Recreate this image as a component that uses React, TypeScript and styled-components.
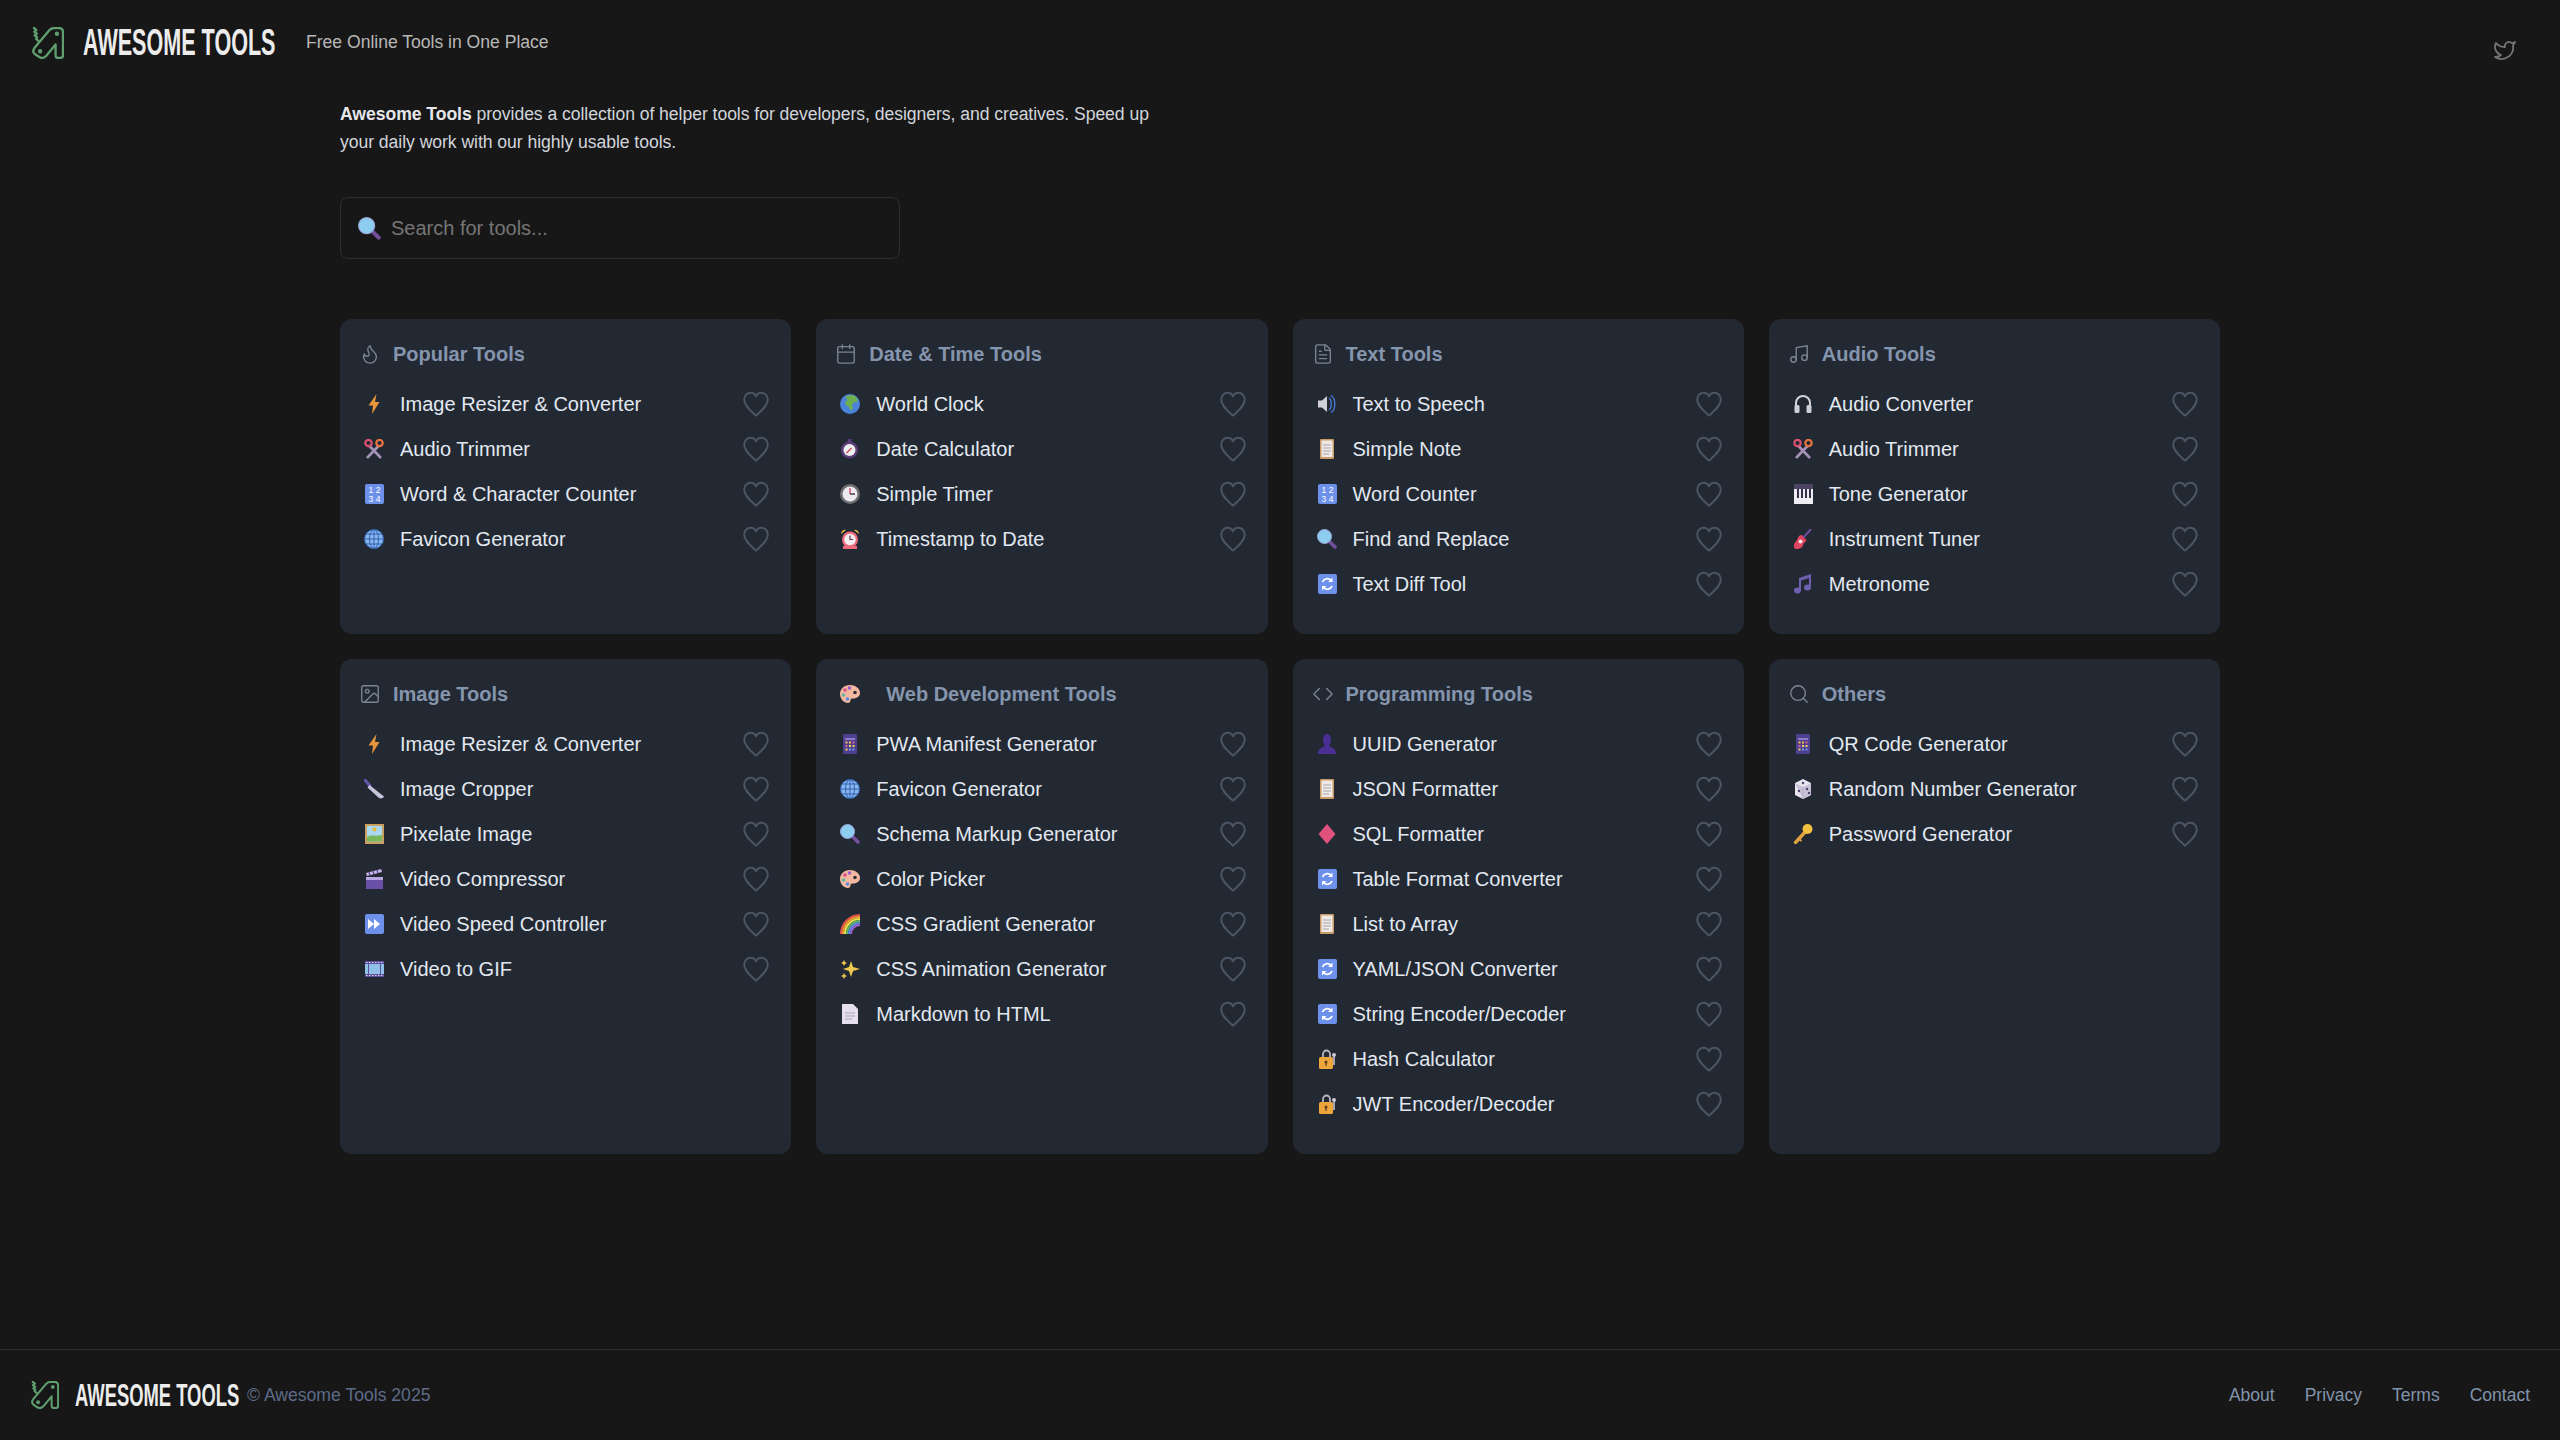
import React from 'react';
import styled, { createGlobalStyle } from 'styled-components';
import { Calendar, Code, FileText, Flame, Image, Music, Search, Twitter } from 'lucide-react';

const GlobalStyle = createGlobalStyle`
  html, body {
    margin: 0;
    padding: 0;
    background: #171717;
  }
  body {
    font-family: "Liberation Sans", Arial, sans-serif;
    color: #e2e8f0;
  }
`;

const Page = styled.div`
  min-height: 1440px;
  display: flex;
  flex-direction: column;
`;

// Header
const Header = styled.header`
  height: 84px;
  display: flex;
  align-items: flex-start;
  justify-content: space-between;
  padding: 24px 43px 0 32px;
  box-sizing: border-box;
`;

const Brand = styled.div`
  display: flex;
  align-items: center;
`;

const LogoText = styled.span<{ $size: number; $box: number }>`
  display: inline-block;
  width: ${p => p.$box}px;
  font-size: ${p => p.$size}px;
  font-weight: 700;
  line-height: 1;
  color: #ececec;
  white-space: nowrap;
  transform: scaleX(0.575);
  transform-origin: left center;
`;

const Tagline = styled.span`
  margin-left: 30px;
  font-size: 17.6px;
  letter-spacing: -0.02px;
  color: #b8b8b8;
`;

const TwitterLink = styled.a`
  display: flex;
  color: #757575;
  margin-top: 14px;
`;

// Intro
const Main = styled.main`
  width: 1880px;
  margin: 0 auto;
  flex: 1;
`;

const Intro = styled.p`
  width: 830px;
  margin: 16px 0 0;
  font-size: 17.6px;
  line-height: 28px;
  letter-spacing: -0.05px;
  color: #d1d5db;

  strong {
    color: #e5e7eb;
  }
`;

const SearchBox = styled.div`
  width: 560px;
  height: 62px;
  margin: 41px 0 60px;
  box-sizing: border-box;
  display: flex;
  align-items: center;
  gap: 10px;
  padding-left: 17px;
  border: 1px solid #2e2e2e;
  border-radius: 8px;
`;

const SearchInput = styled.input`
  flex: 1;
  padding: 0;
  border: 0;
  outline: 0;
  background: transparent;
  font-family: inherit;
  font-size: 20px;
  color: #e2e8f0;

  &::placeholder {
    color: #757575;
    opacity: 1;
  }
`;

// Tool grid
const Grid = styled.div`
  display: grid;
  grid-template-columns: repeat(4, 1fr);
  gap: 25px;
`;

const Card = styled.section`
  background: #232933;
  border-radius: 12px;
  padding: 24px 24px 27px;
`;

const CardTitle = styled.h2`
  display: flex;
  align-items: center;
  height: 23px;
  margin: 0 0 16px;
  font-size: 20px;
  font-weight: 700;
  color: #8595ad;

  > svg.lucide {
    margin: -2px 12px 0 -5px;
    color: #7b8494;
    flex: none;
  }

  > svg.emoji {
    margin: -2px 26px 0 0;
    flex: none;
  }
`;

const ToolList = styled.ul`
  list-style: none;
  margin: 0;
  padding: 0;
`;

const ToolRow = styled.li`
  display: flex;
  align-items: center;
  height: 45px;
  font-size: 20px;
  color: #e2e8f0;

  > svg.emoji {
    margin-top: -2px;
  }
`;

const ToolName = styled.span`
  flex: 1;
  margin-left: 16px;
`;

const HeartButton = styled.button`
  display: flex;
  margin: -2px -2px 0 0;
  padding: 0;
  border: 0;
  background: transparent;
  color: #4b5563;
`;

// Footer
const Footer = styled.footer`
  height: 91px;
  box-sizing: border-box;
  border-top: 1px solid #2e2e2e;
  display: flex;
  align-items: center;
  justify-content: space-between;
  padding: 0 30px 0 31px;
`;

const FooterBrand = styled.div`
  display: flex;
  align-items: center;
`;

const Copyright = styled.span`
  margin-left: 9px;
  font-size: 17.6px;
  color: #5d6b88;
`;

const FooterLinks = styled.nav`
  display: flex;
  gap: 30px;
`;

const FooterLink = styled.a`
  font-size: 17.5px;
  color: #8294ab;
  text-decoration: none;
`;

// Drawings
const LogoMark: React.FC<{ size: number; gap: number }> = ({ size, gap }) => (
  <svg width={size} height={size} viewBox="0 0 95 95" fill="none" stroke="#5f9e6e" strokeWidth="7" strokeLinejoin="round" strokeLinecap="round" style={{ marginRight: gap, flex: 'none' }}>
    <path d="M6 3l7 6-6 5 7 6-6 5 7 5-3 5 7 6" />
    <path d="M9 60L52 9Q58 3 66 3L80 3Q92 3 92 15L92 84Q92 92 83 92L77 92Q70 92 70 84L70 52L42 86Q33 95 23 90L8 80Q-1 72 9 60Z" />
    <circle cx="24" cy="72" r="3" />
    <circle cx="74" cy="20" r="3" />
  </svg>
);

const HeartIcon = () => (
  <svg width="26" height="26" viewBox="0 0 26 26" fill="none" stroke="currentColor" strokeWidth="2" strokeLinejoin="round">
    <path d="M13 24.600C8 19.800 1.200 15 1.200 8.400 1.200 4.600 4.200 1.800 7.600 1.800 10 1.800 12 3.100 13 5.400 14 3.100 16 1.800 18.400 1.800 21.800 1.800 24.800 4.600 24.800 8.400 24.800 15 18 19.800 13 24.600Z" />
  </svg>
);

const emojiArt: Record<string, React.ReactNode> = {
  bolt: <path d="M12.500 0L4.500 11.500h4.500l-1 8.500 7.500-12h-4.500l1.500-8z" fill="#e8963a" />,
  scissors: (
    <g fill="none" strokeWidth="2.600">
      <path d="M3 19L14.500 7M17 19L5.500 7" stroke="#a592b8" />
      <circle cx="4.500" cy="4" r="3.200" stroke="#d9536f" strokeWidth="2.200" />
      <circle cx="15.500" cy="4" r="3.200" stroke="#e8743f" strokeWidth="2.200" />
    </g>
  ),
  numbers: (
    <g>
      <rect x="1" y="0" width="19" height="20" rx="2" fill="#6d90ea" />
      <text x="10.500" y="8.500" fontSize="8.500" textAnchor="middle" fill="#fff" fontFamily="Liberation Sans">1 2</text>
      <text x="10.500" y="17.500" fontSize="8.500" textAnchor="middle" fill="#fff" fontFamily="Liberation Sans">3 4</text>
    </g>
  ),
  globe: (
    <g fill="none" stroke="#2f5fb0" strokeWidth="1">
      <circle cx="10" cy="10" r="9.500" fill="#8ab8ee" />
      <ellipse cx="10" cy="10" rx="4.500" ry="9.500" />
      <path d="M10 .5v19M.5 10h19M2 5h16M2 15h16" />
    </g>
  ),
  earth: (
    <g>
      <circle cx="10" cy="10" r="10" fill="#4b83da" />
      <path d="M5 3c3-2 8-2 10-1l3 4-2 3-2-1-2 3 1 3-2 3-2-4-3-2-1-3 3-2z" fill="#6fb04e" />
    </g>
  ),
  stopwatch: (
    <g>
      <rect x="7.500" y="0" width="4" height="3" fill="#5b3d7a" />
      <circle cx="9.500" cy="11" r="8.500" fill="#5b3d7a" />
      <circle cx="9.500" cy="11" r="6" fill="#eee" />
      <path d="M6.500 14l5-5" stroke="#d0445e" strokeWidth="1.500" />
    </g>
  ),
  clock: (
    <g>
      <circle cx="10" cy="10" r="10" fill="#6e6e6e" />
      <circle cx="10" cy="10" r="7.500" fill="#eceaf0" />
      <path d="M10 4v6" stroke="#c9435e" strokeWidth="1.300" />
      <path d="M10 10h5" stroke="#444" strokeWidth="1.500" />
    </g>
  ),
  alarm: (
    <g>
      <path d="M1 5a4 4 0 0 1 5-4zM19 5a4 4 0 0 0-5-4z" fill="#e8c040" />
      <rect x="3" y="17" width="14" height="3" fill="#ee6a7d" />
      <circle cx="10" cy="10.500" r="8" fill="#ee6a7d" />
      <circle cx="10" cy="10.500" r="5.800" fill="#f3eef2" />
      <path d="M10 6.500v4h3" stroke="#5d3a50" strokeWidth="1.200" fill="none" />
    </g>
  ),
  speaker: (
    <g>
      <path d="M1 6.500h4L10 2v16l-5-4.500H1z" fill="#cfd0d8" />
      <path d="M12 4c3 2 3 10 0 12M14 1.500c5 3 5 14 0 17" stroke="#4a78d8" strokeWidth="1.400" fill="none" />
    </g>
  ),
  clipboard: (
    <g>
      <rect x="3" y="0" width="14" height="20" rx="1" fill="#c99a66" />
      <rect x="4.500" y="1.500" width="11" height="16.500" fill="#efeae6" />
      <path d="M6 6h8M6 9h8M6 12h8M6 15h6" stroke="#a8a4ad" strokeWidth="1" />
    </g>
  ),
  magnifier: (
    <g>
      <path d="M12.500 12.500l5.500 5.500" stroke="#73509c" strokeWidth="3.500" strokeLinecap="round" />
      <circle cx="7.500" cy="7.500" r="7" fill="#8dcdf0" stroke="#9aa6d8" strokeWidth="1" />
    </g>
  ),
  refresh: (
    <g>
      <rect x="1" y="0" width="19" height="20" rx="2" fill="#6d90ea" />
      <path d="M5.500 8A5 5 0 0 1 14 6.500M15 12a5 5 0 0 1-8.500 1.500" stroke="#fff" strokeWidth="1.800" fill="none" />
      <path d="M15.500 3.500v4.500h-4.500zM5 16.500V12h4.500z" fill="#fff" />
    </g>
  ),
  headphones: (
    <g>
      <path d="M3 13V9a7 7 0 0 1 14 0v4" stroke="#d4d4da" strokeWidth="2" fill="none" />
      <rect x="1.500" y="11" width="5" height="8" rx="1.500" fill="#cfcfd6" />
      <rect x="13.500" y="11" width="5" height="8" rx="1.500" fill="#cfcfd6" />
    </g>
  ),
  piano: (
    <g>
      <rect x="1" y="0" width="19" height="20" fill="#f0edf2" />
      <rect x="1" y="0" width="19" height="5" fill="#4d4362" />
      <path d="M4 5h2v9H4zM8 5h2v9H8zM12 5h2v9h-2zM16 5h2v9h-2z" fill="#33304a" />
    </g>
  ),
  guitar: (
    <g>
      <path d="M10 9l8-9" stroke="#6e4ca0" strokeWidth="2" />
      <path d="M8 6c2 0 2 2 3 3s3 1 2 3-3 2-3 4-3 4-6 4-3-2-3-4 2-3 3-5 2-5 4-5z" fill="#e0455f" />
      <circle cx="7.500" cy="12.500" r="2" fill="#f0e6e8" />
    </g>
  ),
  note: (
    <g fill="#6f5fb0">
      <path d="M6 4l12-4v13h-2V4L8 6.500V17H6z" />
      <ellipse cx="4.500" cy="16.500" rx="3.500" ry="3" />
      <ellipse cx="14.500" cy="13.500" rx="3.500" ry="3" />
    </g>
  ),
  picture: (
    <g>
      <rect x="1" y="0" width="19" height="20" fill="#c9a060" />
      <rect x="3" y="2" width="15" height="15.500" fill="#a9d8f0" />
      <path d="M3 17.500V13c4-3 8 0 15-2v6.500z" fill="#78b85a" />
      <circle cx="10.500" cy="5.500" r="2" fill="#e8b830" />
    </g>
  ),
  knife: (
    <g>
      <path d="M1 1l5 6" stroke="#5f55a8" strokeWidth="3.200" strokeLinecap="round" />
      <path d="M5.500 6L20 17.500c-1 2-3 2.500-5 1.500L3.500 8.500z" fill="#c8c4dc" />
    </g>
  ),
  clapper: (
    <g>
      <rect x="2" y="8" width="17" height="12" fill="#6a4fa8" />
      <path d="M2 4l15-4 1 3-15 4z" fill="#c8b8e8" />
      <path d="M5 3.200l1 3M9 2.200l1 3M13 1.100l1 3" stroke="#4f3a88" strokeWidth="1.200" />
      <path d="M2 8h17v3H2z" fill="#b9a5e0" />
    </g>
  ),
  forward: (
    <g>
      <rect x="1" y="0" width="19" height="20" rx="2" fill="#6d90ea" />
      <path d="M4 5l6 5-6 5zM10 5l6 5-6 5z" fill="#fff" />
    </g>
  ),
  film: (
    <g>
      <rect x="1" y="2" width="19" height="16" fill="#5f4fa0" />
      <rect x="1" y="5" width="19" height="10" fill="#8fc0e6" />
      <path d="M4.500 5v10M16.500 5v10" stroke="#5f4fa0" strokeWidth="1" />
      <path d="M2 3.500h17M2 16.500h17" stroke="#d8d8e8" strokeWidth="1" strokeDasharray="1.500 1.500" />
    </g>
  ),
  abacus: (
    <g>
      <rect x="3" y="0" width="14" height="20" rx="1" fill="#4f3f8f" />
      <path d="M5 4h10v2H5z" fill="#8d7ac8" />
      <path d="M5.500 7.500h2v2h-2zM9 7.500h2v2H9z" fill="#f0c040" />
      <path d="M12.500 7.500h2v2h-2zM5.500 11h2v2h-2z" fill="#e0609a" />
      <path d="M9 11h2v2H9zM12.500 11h2v2h-2zM5.500 14.500h2v2h-2z" fill="#f0d060" />
      <path d="M9 14.500h2v2H9zM12.500 14.500h2v2h-2z" fill="#6a9af0" />
    </g>
  ),
  palette: (
    <g>
      <path d="M10 1C4 1 0 5 0 10s4 9 8 9c3 0 2-3 3-4s3 0 5-1 4-2 4-5c0-5-5-8-10-8z" fill="#f2b8a0" />
      <circle cx="5" cy="6" r="1.800" fill="#d8508a" />
      <circle cx="9.500" cy="4" r="1.800" fill="#9a5bd0" />
      <circle cx="3.500" cy="11" r="1.800" fill="#5fb8a0" />
      <circle cx="7.500" cy="15" r="1.800" fill="#5a8ae0" />
      <circle cx="15" cy="8.500" r="1.800" fill="#30303a" />
    </g>
  ),
  rainbow: (
    <g fill="none" strokeWidth="2">
      <path d="M1 20C1 10 9 1 20 1" stroke="#e8504a" />
      <path d="M3 20C3 11 10 3 20 3" stroke="#f0a030" />
      <path d="M5 20C5 12 11 5 20 5" stroke="#f0dc50" />
      <path d="M7 20C7 13 13 7 20 7" stroke="#60b860" />
      <path d="M9 20C9 14 14 9 20 9" stroke="#5a8ae0" />
      <path d="M11 20c0-5 4-9 9-9" stroke="#a060d0" />
    </g>
  ),
  sparkles: (
    <g fill="#f0c850">
      <path d="M11 2l2 6 7 2-7 2-2 6-2-6-6-2 6-2z" />
      <path d="M4 1l1 2 2 1-2 1-1 2-1-2-2-1 2-1zM4 14l1 2 2 1-2 1-1 2-1-2-2-1 2-1z" />
    </g>
  ),
  page: (
    <g>
      <path d="M2 0h11l5 5v15H2z" fill="#e6e0ee" />
      <path d="M5 9h10M5 12h10M5 15h7" stroke="#a8a4b8" strokeWidth="1" />
    </g>
  ),
  bust: <path d="M6 5a4 5 0 0 1 8 0c0 3-1 5-2 7 3 1 7 3 7 8H1c0-5 4-7 7-8-1-2-2-4-2-7z" fill="#4a2f94" />,
  diamond: <path d="M10 0l8.500 10L10 20 1.500 10z" fill="#e0527e" />,
  lock: (
    <g>
      <path d="M6 9V5a3.500 3.500 0 0 1 7 0v4" stroke="#b8b4c0" strokeWidth="1.800" fill="none" />
      <rect x="2" y="8" width="14" height="12" rx="1.500" fill="#eca53c" />
      <circle cx="9" cy="13" r="1.500" fill="#5d3a20" />
      <path d="M9 13v4" stroke="#5d3a20" strokeWidth="1.200" />
      <circle cx="17" cy="6" r="2" fill="#cfcad8" />
      <path d="M17 8v8" stroke="#cfcad8" strokeWidth="1.500" />
    </g>
  ),
  dice: (
    <g>
      <path d="M10 0l8 4v12l-8 4-8-4V4z" fill="#e8e4ee" />
      <path d="M2 4l8 4 8-4v12l-8 4z" fill="#c8c2d8" />
      <path d="M10 8v12" stroke="#a8a2b8" strokeWidth=".6" />
      <circle cx="10" cy="4" r="1.200" fill="#4a3f70" />
      <circle cx="6" cy="12" r="1.200" fill="#4a3f70" />
      <circle cx="14" cy="10" r="1.200" fill="#4a3f70" />
      <circle cx="16" cy="14" r="1.200" fill="#4a3f70" />
    </g>
  ),
  key: (
    <g>
      <path d="M13 7L2.500 18.500" stroke="#e0a040" strokeWidth="3.400" strokeLinecap="round" />
      <path d="M6 15l2.500 2" stroke="#e0a040" strokeWidth="2" />
      <circle cx="14.500" cy="5" r="5" fill="#f0c040" />
    </g>
  ),
};

const Emoji: React.FC<{ name: string; size?: number }> = ({ name, size = 20 }) => (
  <svg className="emoji" width={size} height={size} viewBox="0 0 20 20" style={{ flex: 'none' }}>
    {emojiArt[name]}
  </svg>
);

type Tool = [string, string];

interface Category {
  title: string;
  icon: React.ReactNode;
  tools: Tool[];
}

const lucideProps = { size: 22, strokeWidth: 1.500 };

const categories: Category[] = [
  {
    title: 'Popular Tools',
    icon: <Flame {...lucideProps} />,
    tools: [
      ['bolt', 'Image Resizer & Converter'],
      ['scissors', 'Audio Trimmer'],
      ['numbers', 'Word & Character Counter'],
      ['globe', 'Favicon Generator'],
    ],
  },
  {
    title: 'Date & Time Tools',
    icon: <Calendar {...lucideProps} />,
    tools: [
      ['earth', 'World Clock'],
      ['stopwatch', 'Date Calculator'],
      ['clock', 'Simple Timer'],
      ['alarm', 'Timestamp to Date'],
    ],
  },
  {
    title: 'Text Tools',
    icon: <FileText {...lucideProps} />,
    tools: [
      ['speaker', 'Text to Speech'],
      ['clipboard', 'Simple Note'],
      ['numbers', 'Word Counter'],
      ['magnifier', 'Find and Replace'],
      ['refresh', 'Text Diff Tool'],
    ],
  },
  {
    title: 'Audio Tools',
    icon: <Music {...lucideProps} />,
    tools: [
      ['headphones', 'Audio Converter'],
      ['scissors', 'Audio Trimmer'],
      ['piano', 'Tone Generator'],
      ['guitar', 'Instrument Tuner'],
      ['note', 'Metronome'],
    ],
  },
  {
    title: 'Image Tools',
    icon: <Image {...lucideProps} />,
    tools: [
      ['bolt', 'Image Resizer & Converter'],
      ['knife', 'Image Cropper'],
      ['picture', 'Pixelate Image'],
      ['clapper', 'Video Compressor'],
      ['forward', 'Video Speed Controller'],
      ['film', 'Video to GIF'],
    ],
  },
  {
    title: 'Web Development Tools',
    icon: <Emoji name="palette" />,
    tools: [
      ['abacus', 'PWA Manifest Generator'],
      ['globe', 'Favicon Generator'],
      ['magnifier', 'Schema Markup Generator'],
      ['palette', 'Color Picker'],
      ['rainbow', 'CSS Gradient Generator'],
      ['sparkles', 'CSS Animation Generator'],
      ['page', 'Markdown to HTML'],
    ],
  },
  {
    title: 'Programming Tools',
    icon: <Code {...lucideProps} />,
    tools: [
      ['bust', 'UUID Generator'],
      ['clipboard', 'JSON Formatter'],
      ['diamond', 'SQL Formatter'],
      ['refresh', 'Table Format Converter'],
      ['clipboard', 'List to Array'],
      ['refresh', 'YAML/JSON Converter'],
      ['refresh', 'String Encoder/Decoder'],
      ['lock', 'Hash Calculator'],
      ['lock', 'JWT Encoder/Decoder'],
    ],
  },
  {
    title: 'Others',
    icon: <Search {...lucideProps} />,
    tools: [
      ['abacus', 'QR Code Generator'],
      ['dice', 'Random Number Generator'],
      ['key', 'Password Generator'],
    ],
  },
];

const App: React.FC = () => (
  <Page>
    <GlobalStyle />
    <Header>
      <Brand>
        <LogoMark size={32} gap={19} />
        <LogoText $size={37.500} $box={193}>AWESOME TOOLS</LogoText>
        <Tagline>Free Online Tools in One Place</Tagline>
      </Brand>
      <TwitterLink href="#">
        <Twitter size={24} strokeWidth={1.800} />
      </TwitterLink>
    </Header>
    <Main>
      <Intro>
        <strong>Awesome Tools</strong> provides a collection of helper tools for developers, designers, and creatives. Speed up your daily work with our highly usable tools.
      </Intro>
      <SearchBox>
        <Emoji name="magnifier" size={23} />
        <SearchInput placeholder="Search for tools..." />
      </SearchBox>
      <Grid>
        {categories.map(category => (
          <Card key={category.title}>
            <CardTitle>
              {category.icon}
              {category.title}
            </CardTitle>
            <ToolList>
              {category.tools.map(([emoji, name]) => (
                <ToolRow key={name}>
                  <Emoji name={emoji} />
                  <ToolName>{name}</ToolName>
                  <HeartButton aria-label="Favourite">
                    <HeartIcon />
                  </HeartButton>
                </ToolRow>
              ))}
            </ToolList>
          </Card>
        ))}
      </Grid>
    </Main>
    <Footer>
      <FooterBrand>
        <LogoMark size={28} gap={16} />
        <LogoText $size={32} $box={163}>AWESOME TOOLS</LogoText>
        <Copyright>© Awesome Tools 2025</Copyright>
      </FooterBrand>
      <FooterLinks>
        <FooterLink href="#">About</FooterLink>
        <FooterLink href="#">Privacy</FooterLink>
        <FooterLink href="#">Terms</FooterLink>
        <FooterLink href="#">Contact</FooterLink>
      </FooterLinks>
    </Footer>
  </Page>
);

export default App;
